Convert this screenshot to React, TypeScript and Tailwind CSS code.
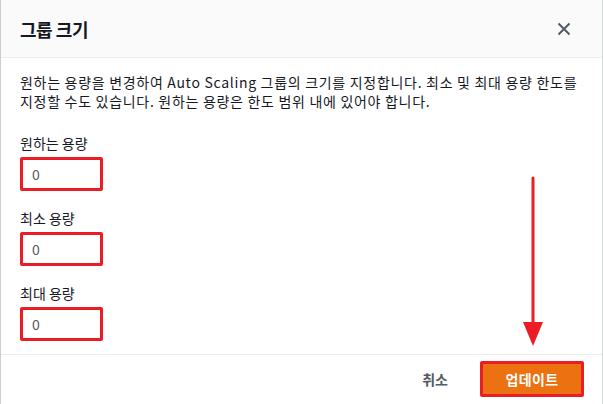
type Field = {
  label: string;
  value: string;
};

const fields: Field[] = [
  { label: "원하는 용량", value: "0" },
  { label: "최소 용량", value: "0" },
  { label: "최대 용량", value: "0" },
];

const font = "font-['Noto_Sans_CJK_KR','Noto_Sans',sans-serif]";

export default function App() {
  return (
    <div
      className={`relative w-[603px] h-[404px] overflow-hidden bg-white border-l border-l-[#c9cfd0] border-r border-r-[#d5dbdb] text-[#16191f] ${font}`}
    >
      {/* header */}
      <div className="h-[58px] bg-[#fafafa] border-b border-[#eaeded] flex items-center justify-between pl-[19px] pr-[30px]">
        <h2 className="text-[18px] font-bold leading-none tracking-tight">그룹 크기</h2>
        <button className="w-[16px] h-[16px] flex items-center justify-center text-[#545b64]">
          <svg width="14" height="14" viewBox="0 0 14 14" fill="none">
            <path d="M1.5 1.5 L12.5 12.5 M12.5 1.5 L1.5 12.5" stroke="currentColor" strokeWidth="2" />
          </svg>
        </button>
      </div>

      {/* body */}
      <div className="h-[296px] px-[19px] pt-[15px]">
        <p className="text-[14px] leading-[19px] tracking-[0.7px] whitespace-nowrap">
          원하는 용량을 변경하여 Auto Scaling 그룹의 크기를 지정합니다. 최소 및 최대 용량 한도를
          <br />
          지정할 수도 있습니다. 원하는 용량은 한도 범위 내에 있어야 합니다.
        </p>
        <div className="mt-[22px] flex flex-col gap-[17px]">
          {fields.map((f) => (
            <div key={f.label}>
              <div className="text-[14px] leading-[20px]">{f.label}</div>
              <div className="mt-[4px] w-[83px] h-[34px] border-[3px] border-[#ec1c24] rounded-[2px] flex items-center pl-[9px] text-[14px] text-[#545b64]">
                {f.value}
              </div>
            </div>
          ))}
        </div>
      </div>

      {/* footer */}
      <div className="border-t border-[#eaeded] flex items-start justify-end gap-[32px] pt-[6px] pr-[18px]">
        <button className="h-[36px] text-[14px] font-bold text-[#545b64]">취소</button>
        <button className="w-[104px] h-[36px] border-[3px] border-[#ec1c24] rounded-[2px] bg-[#ec7211] text-white text-[14px] font-bold tracking-wide">
          업데이트
        </button>
      </div>

      {/* annotation arrow */}
      <svg className="absolute left-[520px] top-[176px]" width="24" height="172" viewBox="0 0 24 172">
        <line x1="12" y1="2" x2="12" y2="150" stroke="#ec1c24" strokeWidth="3" strokeLinecap="round" />
        <polygon points="2,146 22,146 12,170" fill="#ec1c24" />
      </svg>
    </div>
  );
}
